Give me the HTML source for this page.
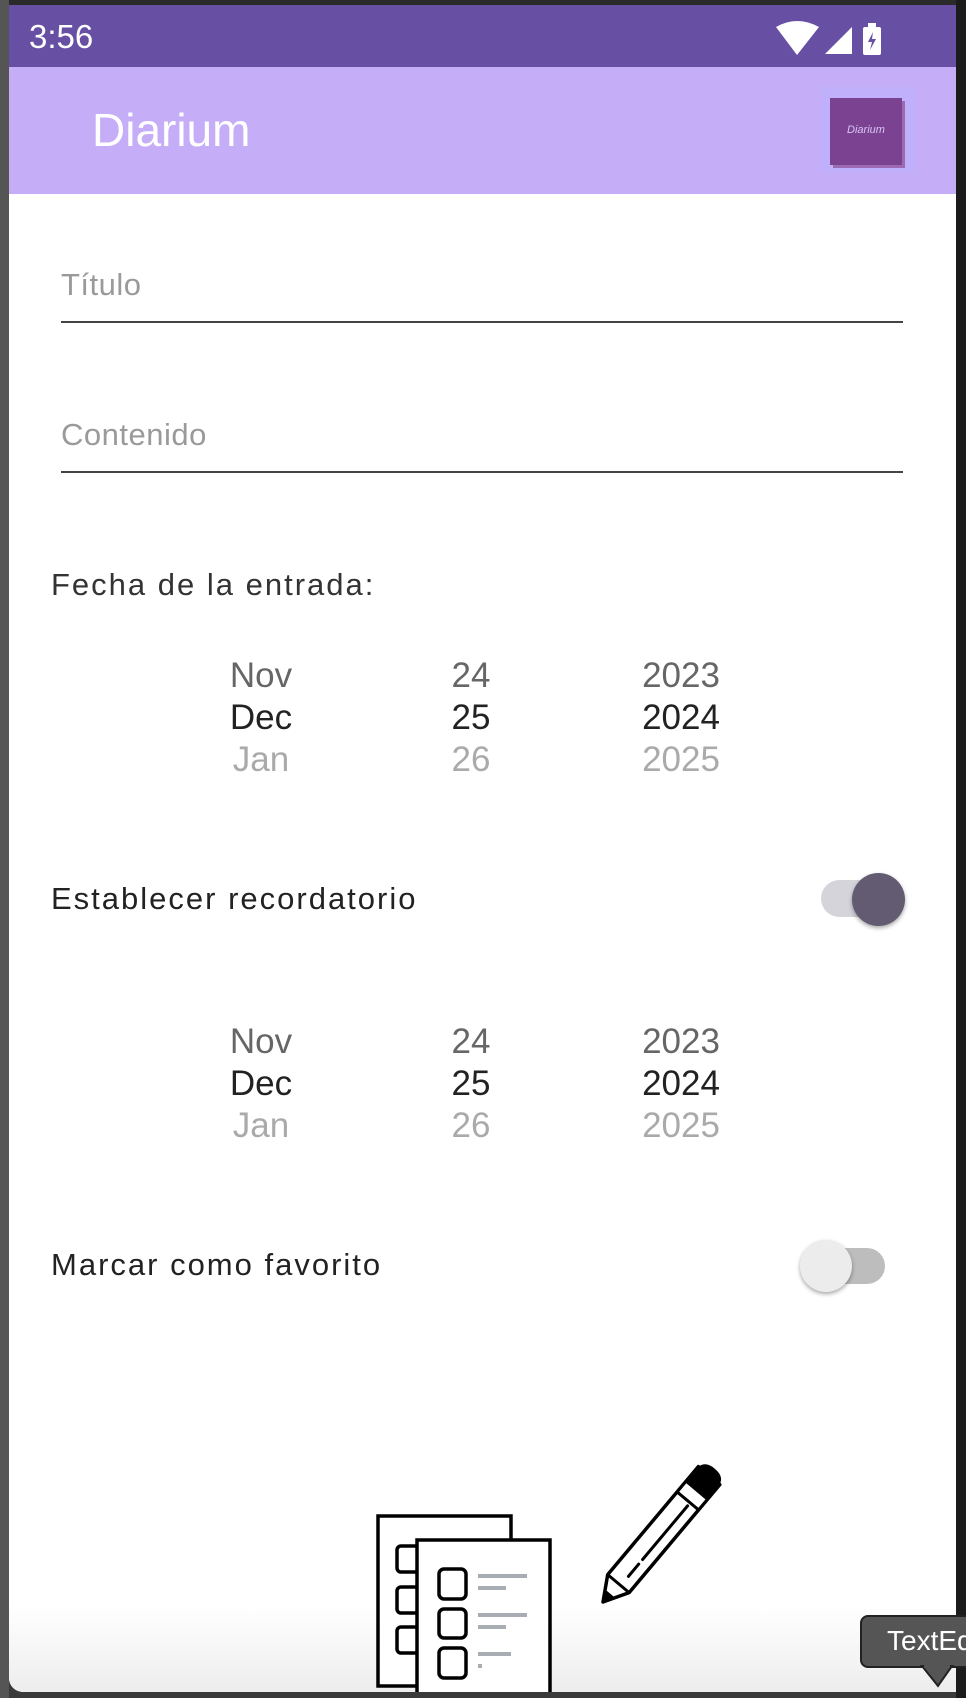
<!DOCTYPE html>
<html><head><meta charset="utf-8"><style>
*{margin:0;padding:0;box-sizing:border-box}
body{width:966px;height:1698px;background:#3a3a3a;position:relative;overflow:hidden;font-family:"Liberation Sans",sans-serif}
.abs{position:absolute}
.hw{font-family:"Liberation Sans",sans-serif;white-space:nowrap;position:absolute}
.pk{position:absolute;font-size:35px;line-height:42px;text-align:center;width:160px;font-family:"Liberation Sans",sans-serif}
</style></head><body>
<div class="abs" style="left:0;top:0;width:966px;height:5px;background:#2a2a2a"></div>
<div class="abs" style="left:0;top:0;width:9px;height:1698px;background:#555"></div>
<div class="abs" style="left:956px;top:0;width:10px;height:1698px;background:#1b1b1b"></div>
<div class="abs" style="left:9px;top:5px;width:947px;height:1687px;background:#fff;border-bottom-left-radius:14px;overflow:hidden">
  <div class="abs" style="left:0;top:1600px;width:947px;height:87px;background:linear-gradient(#fff,#ededed)"></div>
  <div class="abs" style="left:0;top:0;width:947px;height:62px;background:#6750a4"></div>
  <div class="abs" style="left:20px;top:13px;color:#fff;font-size:33px">3:56</div>
  <svg class="abs" style="left:760px;top:16px" width="130" height="36">
    <path d="M7 6 Q28 -6 50 6 L28 34 Z" fill="#fff"/>
    <path d="M56 33 L83 6 L83 33 Z" fill="#fff"/>
    <rect x="94" y="6" width="18" height="28" rx="2" fill="#fff"/><rect x="99" y="2" width="8" height="5" fill="#fff"/>
    <path d="M104 11 L99 21 L103 21 L101 29 L107 18 L103 18 Z" fill="#6750a4"/>
  </svg>
  <div class="abs" style="left:0;top:62px;width:947px;height:127px;background:#c5aef7"></div>
  <div class="hw" style="left:83px;top:98px;color:#fff;font-size:46px">Diarium</div>
  <div class="abs" style="left:811px;top:82px;width:96px;height:86px;background:#c0b0fb"></div>
  <div class="abs" style="left:821px;top:93px;width:72px;height:67px;background:#7a4290;box-shadow:3px 3px 0 #9b6ab0"></div>
  <div class="abs" style="left:821px;top:119px;width:72px;text-align:center;color:#d9c5f5;font-size:11px;font-style:italic">Diarium</div>

  <div class="hw" style="left:52px;top:262px;color:#9a9a9a;font-size:31px;letter-spacing:0.5px">Título</div>
  <div class="abs" style="left:52px;top:316px;width:842px;height:2px;background:#444"></div>
  <div class="hw" style="left:52px;top:412px;color:#9a9a9a;font-size:31px;letter-spacing:0.5px">Contenido</div>
  <div class="abs" style="left:52px;top:466px;width:842px;height:2px;background:#444"></div>
  <div class="hw" style="left:42px;top:562px;color:#333;font-size:31px;letter-spacing:2px">Fecha de la entrada:</div>

  <div class="pk" style="left:172px;top:650px"><div style="color:#666">Nov</div><div style="color:#222">Dec</div><div style="color:#aaa">Jan</div></div>
  <div class="pk" style="left:382px;top:650px"><div style="color:#666">24</div><div style="color:#222">25</div><div style="color:#aaa">26</div></div>
  <div class="pk" style="left:592px;top:650px"><div style="color:#666">2023</div><div style="color:#222">2024</div><div style="color:#aaa">2025</div></div>

  <div class="hw" style="left:42px;top:876px;color:#222;font-size:31px;letter-spacing:2px">Establecer recordatorio</div>
  <div class="abs" style="left:812px;top:875px;width:62px;height:37px;border-radius:19px;background:#d6d4db"></div>
  <div class="abs" style="left:843px;top:868px;width:53px;height:53px;border-radius:50%;background:#625b71;box-shadow:0 2px 4px rgba(0,0,0,.35)"></div>

  <div class="pk" style="left:172px;top:1016px"><div style="color:#666">Nov</div><div style="color:#222">Dec</div><div style="color:#aaa">Jan</div></div>
  <div class="pk" style="left:382px;top:1016px"><div style="color:#666">24</div><div style="color:#222">25</div><div style="color:#aaa">26</div></div>
  <div class="pk" style="left:592px;top:1016px"><div style="color:#666">2023</div><div style="color:#222">2024</div><div style="color:#aaa">2025</div></div>

  <div class="hw" style="left:42px;top:1242px;color:#222;font-size:31px;letter-spacing:2px">Marcar como favorito</div>
  <div class="abs" style="left:800px;top:1243px;width:76px;height:36px;border-radius:18px;background:#bdbdbd"></div>
  <div class="abs" style="left:791px;top:1235px;width:52px;height:52px;border-radius:50%;background:#ececec;box-shadow:0 2px 4px rgba(0,0,0,.35)"></div>

  <svg class="abs" style="left:0;top:0" width="947" height="1687">
    <g fill="#fff" stroke="#000" stroke-width="3.5">
      <rect x="369" y="1511" width="133" height="170"/>
      <rect x="388" y="1541" width="22" height="26" rx="4"/>
      <rect x="388" y="1582" width="22" height="26" rx="4"/>
      <rect x="388" y="1622" width="22" height="26" rx="4"/>
      <rect x="408" y="1535" width="133" height="160"/>
      <rect x="430" y="1564" width="27" height="30" rx="5"/>
      <rect x="430" y="1604" width="27" height="29" rx="5"/>
      <rect x="430" y="1643" width="27" height="30" rx="5"/>
    </g>
    <g stroke="#a8adb3" stroke-width="4">
      <line x1="469" y1="1571" x2="518" y2="1571"/><line x1="469" y1="1583" x2="497" y2="1583"/>
      <line x1="469" y1="1610" x2="518" y2="1610"/><line x1="469" y1="1622" x2="497" y2="1622"/>
      <line x1="469" y1="1649" x2="502" y2="1649"/><line x1="469" y1="1661" x2="473" y2="1661"/>
    </g>
    <g transform="translate(594,1597) rotate(-50)">
      <path d="M0 0 L24 -14 L165 -14 L165 14 L24 14 Z" fill="#fff" stroke="#000" stroke-width="3.5" stroke-linejoin="round"/>
      <path d="M0 0 L11 -6.5 L11 6.5 Z" fill="#000"/>
      <line x1="24" y1="-14" x2="24" y2="14" stroke="#000" stroke-width="3"/>
      <line x1="36" y1="3" x2="128" y2="3" stroke="#000" stroke-width="3" stroke-dasharray="16 6 80" stroke-linecap="round"/>
      <rect x="132" y="-14" width="14" height="28" fill="#fff" stroke="#000" stroke-width="3"/>
      <path d="M146 -14 L162 -14 Q174 -14 174 0 Q174 14 162 14 L146 14 Z" fill="#000"/>
    </g>
  </svg>
</div>
<div class="abs" style="left:860px;top:1615px;width:120px;height:53px;background:#555;border:2px solid #222;border-radius:8px"></div>
<svg class="abs" style="left:920px;top:1664px" width="40" height="26"><path d="M2 2 L18 22 L32 2 Z" fill="#555" stroke="#222" stroke-width="2"/><rect x="4" y="0" width="26" height="4" fill="#555"/></svg>
<div class="abs" style="left:887px;top:1625px;color:#fff;font-size:28px">TextEd</div>
</body></html>
